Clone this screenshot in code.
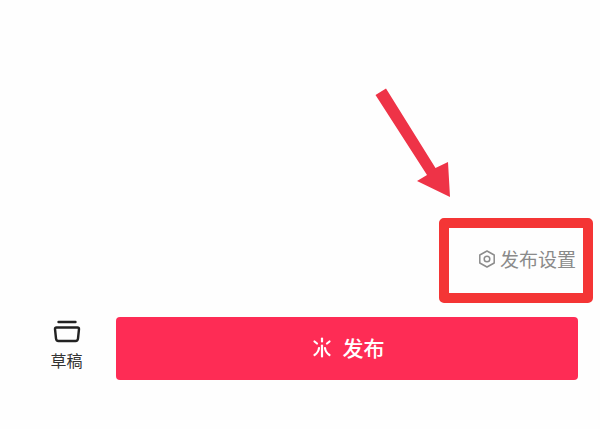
<script>
  // arrow is an annotation drawn over the page
</script>

<div class="page">
  <svg class="arrow" width="100" height="120" viewBox="0 0 100 120">
    <path d="M5.5 12 L16 5.5 L65.5 85 L78 79 L80 114 L47 98 L57 92 Z" fill="#ee3347" />
  </svg>

  <div class="settings-row">
    <div class="settings-box">
      <svg class="hex" width="18" height="18" viewBox="0 0 18 18">
        <path d="M9 1 L16.2 5 V13 L9 17 L1.8 13 V5 Z" fill="none" stroke="#8c8c8c" stroke-width="1.5" stroke-linejoin="round" />
        <circle cx="9" cy="9" r="2.8" fill="none" stroke="#8c8c8c" stroke-width="1.5" />
      </svg>
      <span>发布设置</span>
    </div>
  </div>

  <div class="bottom-row">
    <div class="draft">
      <svg width="28" height="23" viewBox="0 0 28 23">
        <path d="M5.5 2 H22.5" stroke="#222" stroke-width="2.4" stroke-linecap="round" fill="none" />
        <path d="M2 9 Q2 7.5 3.5 7.5 H24.5 Q26 7.5 26 9 L25 18.5 Q24.8 21 22.5 21 H5.5 Q3.2 21 3 18.5 Z" stroke="#222" stroke-width="2.4" stroke-linejoin="round" fill="none" />
      </svg>
      <span>草稿</span>
    </div>
    <button class="publish">
      <svg width="20" height="21" viewBox="0 0 20 21">
        <g stroke="#fff" stroke-width="2.2" stroke-linecap="round" fill="none">
          <path d="M10 1.5 V4.5" />
          <path d="M2.5 4.5 L5 6.5" />
          <path d="M17.5 4.5 L15 6.5" />
          <path d="M10 8.5 V19.5" />
          <path d="M7 11 Q6.5 15.5 2.5 18" />
          <path d="M13 11 Q13.5 15.5 17.5 18" />
        </g>
      </svg>
      <span>发布</span>
    </button>
  </div>
</div>

<style>
  :global(body) {
    margin: 0;
    background: #fefefe;
  }

  .page {
    position: relative;
    width: 600px;
    height: 429px;
    overflow: hidden;
    box-sizing: border-box;
    padding: 218px 7px 0 0;
    font-family: "Noto Sans CJK SC", "Noto Sans", sans-serif;
  }

  .arrow {
    position: absolute;
    left: 370px;
    top: 83px;
  }

  .settings-row {
    display: flex;
    justify-content: flex-end;
  }

  .settings-box {
    box-sizing: border-box;
    width: 154px;
    height: 85px;
    border: 10px solid #f43535;
    border-radius: 5px;
    display: flex;
    align-items: center;
    justify-content: flex-end;
    gap: 4px;
    padding: 0 7px 4px 0;
    color: #8a8a8a;
    font-size: 19px;
  }

  .bottom-row {
    display: flex;
    align-items: stretch;
    margin-top: 14px;
    padding-left: 50px;
    padding-right: 15px;
  }

  .draft {
    width: 66px;
    box-sizing: border-box;
    padding: 3px 33px 0 0;
    display: flex;
    flex-direction: column;
    align-items: center;
    color: #333;
    font-size: 16px;
    line-height: 20px;
    white-space: nowrap;
  }

  .draft svg {
    margin-bottom: 7px;
  }

  .publish {
    flex: 1;
    height: 63px;
    border: none;
    border-radius: 4px;
    background: #fe2c55;
    color: #fff;
    font-family: inherit;
    font-size: 21px;
    font-weight: 500;
    display: flex;
    align-items: center;
    justify-content: center;
    gap: 11px;
    padding: 0 0 3px 2px;
  }
</style>
